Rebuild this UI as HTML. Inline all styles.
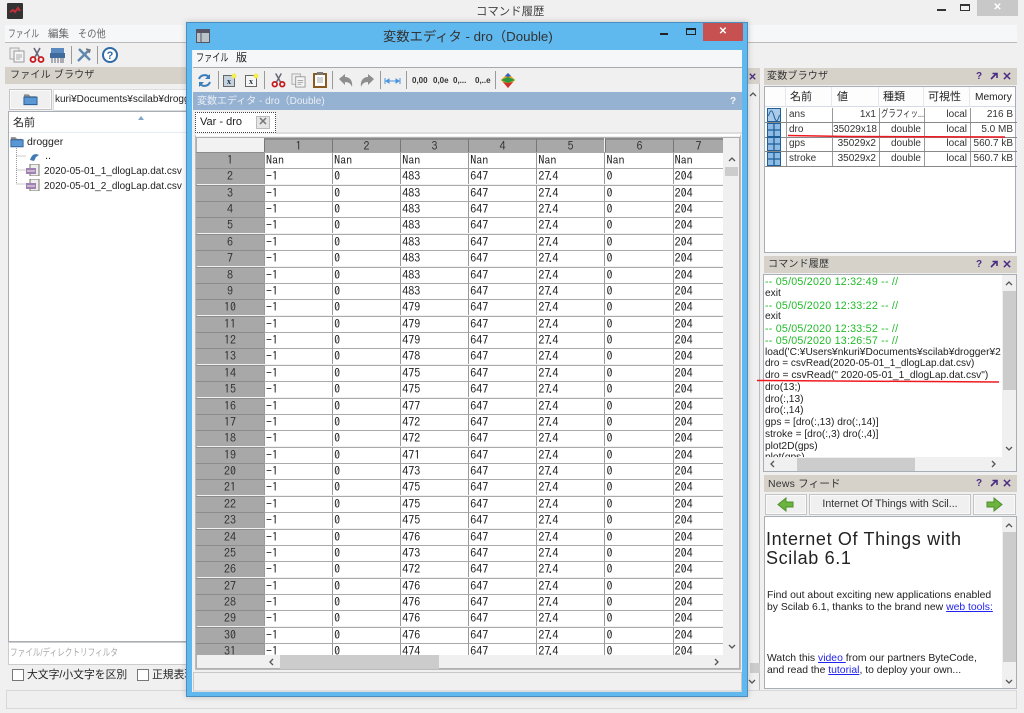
<!DOCTYPE html>
<html lang="ja"><head><meta charset="utf-8"><title>コマンド履歴</title>
<style>
*{box-sizing:border-box}
html,body{margin:0;padding:0;background:#f0f0f0}
#root{position:relative;width:1024px;height:713px;overflow:hidden;background:#f0f0f0;font-family:"Liberation Sans","Noto Sans CJK JP",sans-serif;font-size:11px;color:#222;filter:blur(.3px)}
.a{position:absolute;white-space:nowrap}
.k{display:inline-block;transform-origin:0 50%;white-space:nowrap}
.ph{position:absolute;background:#d6d2ca;height:17px;font-size:10px;line-height:18px;padding-left:3px;color:#333;letter-spacing:.2px}
.q{position:absolute;color:#4b2c83;font-weight:bold;font-size:10px;line-height:12px}
.box{position:absolute;background:#fff;border:1px solid #a9aeb6}
.btn{position:absolute;background:#f0f0f0;border:1px solid #c4c4c4;box-shadow:inset 0 0 0 1px #fafafa}
.sb{position:absolute;background:#f0f0f0}
.th{position:absolute;background:#ccc}
.m{font-family:"IPAGothic","Liberation Mono",monospace;font-size:12px;color:#222}
.m u{text-decoration:none;margin:0 -2px}
.r{position:absolute;left:0;height:17px;display:flex;line-height:15px}
.r b{display:block;width:68px;height:16px;background:#a8a8a8;border-top:1px solid #8c8c8c;font-weight:normal;text-align:center;color:#333}
.r i{display:block;width:68.1px;height:16px;background:#fff;font-style:normal;padding-left:1px;border-left:1px solid #999;border-top:1px solid #aaa}
.r i:last-child{width:50px}
.ch{position:absolute;top:0;height:14px;background:#a8a8a8;border-top:2px solid #8a8a8a;border-left:1px solid #777;text-align:center;line-height:12px;color:#333}
.vr{position:absolute;left:0;width:252px;height:15px;border-bottom:1px solid #888;font-size:10px;line-height:14px;color:#333}
.vr span{position:absolute;top:0;height:14px;border-left:1px solid #999;padding:0 3px 0 2px}
.vr .t{text-align:right}
.cl{position:absolute;left:1px;font-size:10.2px;line-height:12px;color:#222;white-space:nowrap}
.g{color:#22bb2a;font-size:10.7px;letter-spacing:.22px}
.n{position:absolute;left:2px;font-size:10.4px;line-height:12px;white-space:nowrap;color:#222}
.n a{color:#2222ee;text-decoration:underline}
svg{position:absolute;overflow:visible}
.sep{position:absolute;width:1px;background:#9a9a9a}
.tt{position:absolute;font-size:8px;font-weight:bold;color:#333;top:76px}
</style></head><body><div id="root">

<svg width="0" height="0" style="position:absolute"><defs>
<symbol id="sc" viewBox="0 0 16 16"><path d="M5 1l5 9M11 1L6 10" stroke="#667" stroke-width="1.6" fill="none"/><circle cx="4" cy="12.5" r="2.5" fill="none" stroke="#c8161b" stroke-width="1.8"/><circle cx="12" cy="12.5" r="2.5" fill="none" stroke="#c8161b" stroke-width="1.8"/></symbol>
<symbol id="cp" viewBox="0 0 16 16"><rect x="1" y="1" width="9" height="11" fill="#eee" stroke="#aaa"/><rect x="5" y="4" width="10" height="11" fill="#f5f5f5" stroke="#999"/><path d="M7 8h6M7 10h6M7 12h4" stroke="#aaa"/></symbol>
<symbol id="gr" viewBox="0 0 14 14"><rect x=".5" y=".5" width="13" height="13" fill="#8dbbe3" stroke="#1f5f99"/><path d="M7 1v12M1 7h12" stroke="#1f5f99" stroke-width="1.3"/></symbol>
<symbol id="fo" viewBox="0 0 16 14"><path d="M1 12V2h5l2 2h6v3z" fill="#8a8a8a"/><path d="M1 5h14v8H1z" fill="#5b97d5" stroke="#2a5c94"/></symbol>
<symbol id="cs" viewBox="0 0 14 12"><rect x="4" y="0" width="9" height="12" fill="#eee" stroke="#776"/><rect x="0" y="4" width="10" height="6" fill="#a080b0"/><path d="M1 7h8" stroke="#eee"/></symbol>
<symbol id="pa" viewBox="0 0 8 8"><path d="M1 7l5-5M2.5 1.5h4.500v4.500" stroke="#4b2c83" stroke-width="1.6" fill="none"/></symbol>
<symbol id="px" viewBox="0 0 9 9"><path d="M1 1l7 7M8 1l-7 7" stroke="#4b2c83" stroke-width="1.7" fill="none"/></symbol>
</defs></svg>

<!-- main window chrome -->
<svg style="left:7px;top:3px" width="16" height="16"><rect width="16" height="16" fill="#333" rx="1"/><path d="M3 9l3-2 2 2 3-4 2 3" stroke="#c0303a" stroke-width="2" fill="none"/></svg>
<div class="a" style="left:476px;top:3px;font-size:11.4px;line-height:18px;color:#444">コマンド履歴</div>
<div class="a" style="left:937px;top:9px;width:9px;height:2px;background:#333"></div>
<div class="a" style="left:960px;top:4px;width:10px;height:7px;border:1px solid #333;border-top:2px solid #333"></div>
<div class="a" style="left:977px;top:0;width:41px;height:16px;background:#c8c8c8;color:#fff;text-align:center;font-size:10px;font-weight:bold;line-height:15px">✕</div>
<div class="a" style="left:5px;top:25px;width:1012px;height:18px;background:#f6f7f8;border-bottom:1px solid #bbb"></div>
<div class="a" style="left:8px;top:26px;font-size:10.5px;line-height:16px;color:#666"><span class="k" style="transform:scaleX(.74)">ファイル</span></div>
<div class="a" style="left:48px;top:26px;font-size:10.5px;line-height:16px;color:#666">編集</div>
<div class="a" style="left:78px;top:26px;font-size:10.5px;line-height:16px;color:#666"><span class="k" style="transform:scaleX(.88)">その他</span></div>

<svg style="left:9px;top:47px" width="16" height="16"><use href="#cp"/></svg>
<svg style="left:29px;top:47px" width="16" height="16"><use href="#sc"/></svg>
<svg style="left:50px;top:48px" width="16" height="15"><rect x="1" y="0" width="13" height="6" fill="#5b8ac0"/><rect x="0" y="5" width="15" height="5" fill="#3e6a9c"/><path d="M2 10v5M5 10v5M8 10v5M11 10v5M13 10v5" stroke="#667" /></svg>
<div class="sep" style="left:71px;top:46px;height:18px"></div>
<svg style="left:76px;top:47px" width="16" height="16"><path d="M2 14L13 3M3 2l11 11" stroke="#5f87ad" stroke-width="2.4"/><path d="M10 2l4 1-1 3" stroke="#777" fill="none" stroke-width="1.5"/></svg>
<div class="sep" style="left:97px;top:46px;height:18px"></div>
<svg style="left:102px;top:47px" width="16" height="16"><circle cx="8" cy="8" r="7" fill="#fff" stroke="#2f6aa8" stroke-width="2"/><text x="8" y="12" font-size="11" font-weight="bold" text-anchor="middle" fill="#2f6aa8" font-family="Liberation Sans">?</text></svg>

<!-- left panel -->
<div class="ph" style="left:5px;top:67px;width:182px;padding-left:5px">ファイル ブラウザ</div>
<div class="btn" style="left:9px;top:89px;width:43px;height:21px"></div>
<svg style="left:23px;top:92px" width="15" height="14"><use href="#fo"/></svg>
<div class="a box" style="left:53px;top:89px;width:135px;height:22px;border-color:#ddd;line-height:20px;padding-left:1px;font-size:10px;overflow:hidden">kuri¥Documents¥scilab¥drogger¥</div>
<div class="box" style="left:8px;top:111px;width:180px;height:531px"></div>
<div class="a" style="left:13px;top:116px;font-size:11px;line-height:14px">名前</div>
<div class="a" style="left:9px;top:132px;width:178px;height:1px;background:#e6ecf3"></div>
<div class="a" style="left:138px;top:113px;width:0;height:0;border:3px solid transparent;border-bottom:4px solid #7ea6cc"></div>
<svg style="left:10px;top:135px" width="14" height="13"><use href="#fo"/></svg>
<div class="a" style="left:27px;top:136px;line-height:13px;font-size:10.5px">drogger</div>
<svg style="left:16px;top:148px" width="30" height="40"><path d="M.5 0V36M.5 8h10M.5 22h10M.5 36h10" stroke="#999" stroke-dasharray="1 1" fill="none"/></svg>
<svg style="left:29px;top:151px" width="11" height="11"><path d="M1 9C3 3 6 2 10 4L7 6 5 10z" fill="#3f7ab5"/></svg>
<div class="a" style="left:45px;top:150px;line-height:12px">..</div>
<svg style="left:26px;top:164px" width="14" height="12"><use href="#cs"/></svg>
<svg style="left:26px;top:179px" width="14" height="12"><use href="#cs"/></svg>
<div class="a" style="left:44px;top:165px;line-height:14px;font-size:10px">2020-05-01_1_dlogLap.dat.csv</div>
<div class="a" style="left:44px;top:180px;line-height:14px;font-size:10px">2020-05-01_2_dlogLap.dat.csv</div>
<div class="box" style="left:8px;top:642px;width:180px;height:23px;border-color:#ccc;color:#aaa;font-size:10px;line-height:21px;padding-left:1px;white-space:nowrap;overflow:hidden"><span class="k" style="transform:scaleX(.76)">ファイル/ディレクトリフィルタ</span></div>
<div class="a" style="left:12px;top:669px;width:12px;height:12px;background:#fff;border:1px solid #777"></div>
<div class="a" style="left:27px;top:668px;font-size:10.8px;line-height:14px">大文字/小文字を区別</div>
<div class="a" style="left:137px;top:669px;width:12px;height:12px;background:#fff;border:1px solid #777"></div>
<div class="a" style="left:152px;top:668px;font-size:10.8px;line-height:14px">正規表現</div>
<div class="a" style="left:6px;top:690px;width:1011px;height:19px;border:1px solid #d8d8d8;background:#efefef"></div>

<!-- middle sliver -->
<div class="a" style="left:748px;top:68px;width:12px;height:16px;background:#d6d2ca"></div>
<svg style="left:749px;top:73px" width="7" height="7"><use href="#px"/></svg>
<div class="a" style="left:749px;top:84px;width:11px;height:606px;background:#f0f0f0;border-right:1px solid #bbb"></div>
<div class="a" style="left:750px;top:663px;width:10px;height:10px;background:#ccc"></div>
<svg style="left:749px;top:92px" width="8" height="5"><path d="M1 4l3-3 3 3" stroke="#555" stroke-width="1.3" fill="none"/></svg>
<svg style="left:748px;top:679px" width="8" height="5"><path d="M1 1l3 3 3-3" stroke="#555" stroke-width="1.3" fill="none"/></svg>

<!-- variable browser -->
<div class="ph" style="left:764px;top:68px;width:253px">変数ブラウザ</div>
<div class="q" style="left:976px;top:71px">?</div><svg style="left:990px;top:72px" width="8" height="8"><use href="#pa"/></svg><svg style="left:1003px;top:72px" width="8" height="8"><use href="#px"/></svg>
<div class="box" style="left:764px;top:86px;width:252px;height:167px;border-color:#a9aeb6"></div>
<div class="a" style="left:765px;top:87px;width:250px;height:20px;background:#fdfdfd;border-bottom:1px solid #d5dce5"></div>
<div class="a" style="left:790px;top:90px;font-size:11px;line-height:15px">名前</div>
<div class="a" style="left:837px;top:90px;font-size:11px;line-height:15px">値</div>
<div class="a" style="left:883px;top:90px;font-size:11px;line-height:15px">種類</div>
<div class="a" style="left:928px;top:90px;font-size:11px;line-height:15px">可視性</div>
<div class="a" style="left:975px;top:90px;font-size:10.2px;line-height:15px">Memory</div>
<div class="a" style="left:785px;top:87px;width:1px;height:20px;background:#e4e8ee"></div>
<div class="a" style="left:831px;top:87px;width:1px;height:20px;background:#e4e8ee"></div>
<div class="a" style="left:878px;top:87px;width:1px;height:20px;background:#e4e8ee"></div>
<div class="a" style="left:923px;top:87px;width:1px;height:20px;background:#e4e8ee"></div>
<div class="a" style="left:969px;top:87px;width:1px;height:20px;background:#e4e8ee"></div>
<div class="a" style="left:765px;top:108px;width:250px;height:58px">
 <div class="vr" style="top:0"><span style="left:21px;width:46px">ans</span><span class="t" style="left:67px;width:47px">1x1</span><span style="left:114px;width:45px;overflow:hidden;padding:0 0 0 1px;white-space:nowrap"><span class="k" style="position:static;border:0;padding:0;transform:scaleX(.74)">グラフィッ...</span></span><span class="t" style="left:159px;width:46px">local</span><span class="t" style="left:205px;width:46px">216 B</span></div>
 <div class="vr" style="top:14.6px"><span style="left:21px;width:46px">dro</span><span class="t" style="left:67px;width:47px;padding:0 2px 0 0">35029x18</span><span class="t" style="left:114px;width:45px">double</span><span class="t" style="left:159px;width:46px">local</span><span class="t" style="left:205px;width:46px">5.0 MB</span></div>
 <div class="vr" style="top:29.2px"><span style="left:21px;width:46px">gps</span><span class="t" style="left:67px;width:47px">35029x2</span><span class="t" style="left:114px;width:45px">double</span><span class="t" style="left:159px;width:46px">local</span><span class="t" style="left:205px;width:46px">560.7 kB</span></div>
 <div class="vr" style="top:43.8px"><span style="left:21px;width:46px">stroke</span><span class="t" style="left:67px;width:47px">35029x2</span><span class="t" style="left:114px;width:45px">double</span><span class="t" style="left:159px;width:46px">local</span><span class="t" style="left:205px;width:46px">560.7 kB</span></div>
</div>
<svg style="left:767px;top:108px" width="14" height="14"><rect x=".5" y=".5" width="13" height="13" fill="#a9cbe9" stroke="#1f5f99"/><path d="M1.500 8c2-7 3.500-7 5.500 0s3.500 6 5.500-1" stroke="#1f5f99" fill="none"/></svg>
<svg style="left:767px;top:123px" width="14" height="14"><use href="#gr"/></svg>
<svg style="left:767px;top:137px" width="14" height="14"><use href="#gr"/></svg>
<svg style="left:767px;top:152px" width="14" height="14"><use href="#gr"/></svg>
<svg style="left:788px;top:134px" width="220" height="5"><path d="M0 1.5L60 2.5 217 3" stroke="#f01820" stroke-width="1.5" fill="none"/></svg>

<!-- command history -->
<div class="ph" style="left:764px;top:256px;width:253px;padding-left:4px">コマンド履歴</div>
<div class="q" style="left:976px;top:259px">?</div><svg style="left:990px;top:260px" width="8" height="8"><use href="#pa"/></svg><svg style="left:1003px;top:260px" width="8" height="8"><use href="#px"/></svg>
<div class="box" style="left:763px;top:274px;width:254px;height:198px;overflow:hidden;border-color:#a9aeb6">
 <div class="cl g" style="top:1px">-- 05/05/2020 12:32:49 -- //</div>
 <div class="cl" style="top:13px">exit</div>
 <div class="cl g" style="top:25px">-- 05/05/2020 12:33:22 -- //</div>
 <div class="cl" style="top:36px">exit</div>
 <div class="cl g" style="top:48px">-- 05/05/2020 12:33:52 -- //</div>
 <div class="cl g" style="top:60px">-- 05/05/2020 13:26:57 -- //</div>
 <div class="cl" style="top:72px">load('C:¥Users¥nkuri¥Documents¥scilab¥drogger¥2</div>
 <div class="cl" style="top:83px;font-size:10px">dro = csvRead(2020-05-01_1_dlogLap.dat.csv)</div>
 <div class="cl" style="top:95px">dro = csvRead(" 2020-05-01_1_dlogLap.dat.csv")</div>
 <div class="cl" style="top:107px">dro(13;)</div>
 <div class="cl" style="top:119px">dro(:,13)</div>
 <div class="cl" style="top:130px">dro(:,14)</div>
 <div class="cl" style="top:142px">gps = [dro(:,13) dro(:,14)]</div>
 <div class="cl" style="top:154px">stroke = [dro(:,3) dro(:,4)]</div>
 <div class="cl" style="top:166px">plot2D(gps)</div>
 <div class="cl" style="top:177px">plot(gps)</div>
 <div class="sb" style="left:0;top:182px;width:252px;height:14px"></div>
 <div class="sb" style="left:238px;top:0;width:14px;height:196px"></div>
 <div class="th" style="left:239px;top:16px;width:13px;height:99px"></div>
 <div class="th" style="left:33px;top:183px;width:118px;height:13px"></div>
</div>
<svg style="left:1005px;top:281px" width="8" height="5"><path d="M1 4l3-3 3 3" stroke="#555" stroke-width="1.3" fill="none"/></svg>
<svg style="left:1005px;top:446px" width="8" height="5"><path d="M1 1l3 3 3-3" stroke="#555" stroke-width="1.3" fill="none"/></svg>
<svg style="left:770px;top:460px" width="5" height="8"><path d="M4 1L1 4l3 3" stroke="#555" stroke-width="1.3" fill="none"/></svg>
<svg style="left:991px;top:460px" width="5" height="8"><path d="M1 1l3 3-3 3" stroke="#555" stroke-width="1.3" fill="none"/></svg>
<svg style="left:757px;top:379px" width="243" height="5"><path d="M0 1.5L242 3" stroke="#f01820" stroke-width="1.5" fill="none"/></svg>

<!-- news -->
<div class="ph" style="left:764px;top:475px;width:253px;font-size:10.5px;padding-left:4px">News フィード</div>
<div class="q" style="left:976px;top:478px">?</div><svg style="left:990px;top:479px" width="8" height="8"><use href="#pa"/></svg><svg style="left:1003px;top:479px" width="8" height="8"><use href="#px"/></svg>
<div class="btn" style="left:765px;top:494px;width:42px;height:21px"></div>
<svg style="left:777px;top:497px" width="17" height="15"><path d="M1 7.5L9 1v4h7v5H9v4z" fill="#6cb33f" stroke="#4b8f28"/></svg>
<div class="btn" style="left:809px;top:494px;width:162px;height:21px;text-align:center;line-height:19px;font-size:10.6px;color:#333">Internet Of Things with Scil...</div>
<div class="btn" style="left:973px;top:494px;width:43px;height:21px"></div>
<svg style="left:986px;top:497px" width="17" height="15"><path d="M16 7.5L8 1v4H1v5h7v4z" fill="#6cb33f" stroke="#4b8f28"/></svg>
<div class="box" style="left:764px;top:516px;width:253px;height:173px;overflow:hidden">
 <div class="a" style="left:1px;top:13px;font-size:18px;line-height:19px;letter-spacing:.65px;color:#222">Internet Of Things with<br>Scilab 6.1</div>
 <div class="n" style="top:73px">Find out about exciting new applications enabled</div>
 <div class="n" style="top:85px">by Scilab 6.1, thanks to the brand new <a>web tools:</a></div>
 <div class="n" style="top:136px">Watch this <a>video </a>from our partners ByteCode,</div>
 <div class="n" style="top:148px">and read the <a>tutorial</a>, to deploy your own...</div>
 <div class="sb" style="left:237px;top:0;width:14px;height:171px"></div>
 <div class="th" style="left:238px;top:15px;width:13px;height:130px"></div>
</div>
<svg style="left:1005px;top:523px" width="8" height="5"><path d="M1 4l3-3 3 3" stroke="#555" stroke-width="1.3" fill="none"/></svg>
<svg style="left:1005px;top:679px" width="8" height="5"><path d="M1 1l3 3 3-3" stroke="#555" stroke-width="1.3" fill="none"/></svg>

<!-- floating editor window -->
<div class="a" style="left:186px;top:22px;width:562px;height:675px;background:#5fb8ee;border:1px solid #4a8fc0;box-shadow:0 0 6px rgba(0,0,0,.2)"></div>
<svg style="left:196px;top:29px" width="14" height="14"><rect x=".5" y=".5" width="13" height="13" fill="#b8c4c8" stroke="#556"/><rect x="1" y="1" width="12" height="3" fill="#556"/><path d="M5 4v9" stroke="#556"/></svg>
<div class="a" style="left:383px;top:27px;font-size:13.3px;line-height:20px;color:#333">変数エディタ - dro（Double)</div>
<div class="a" style="left:660px;top:33px;width:8px;height:2px;background:#222"></div>
<div class="a" style="left:686px;top:28px;width:10px;height:7px;border:1px solid #222;border-top:2px solid #222"></div>
<div class="a" style="left:703px;top:23px;width:40px;height:18px;background:#c75050;color:#fff;text-align:center;font-weight:bold;font-size:10px;line-height:17px">✕</div>
<div class="a" style="left:192px;top:50px;width:550px;height:642px;background:#f0f0f0"></div>
<div class="a" style="left:193px;top:50px;width:549px;height:18px;background:#f6f7f8;border-bottom:1px solid #aaa"></div>
<div class="a" style="left:196px;top:50px;font-size:11px;line-height:16px"><span class="k" style="transform:scaleX(.74)">ファイル</span></div>
<div class="a" style="left:236px;top:50px;font-size:11px;line-height:16px">版</div>

<svg style="left:197px;top:73px" width="15" height="15"><path d="M2 6a6 6 0 0 1 10-2M13 9a6 6 0 0 1-10 2" stroke="#3c7dbb" stroke-width="2" fill="none"/><path d="M13 1v5H8zM2 14V9h5z" fill="#3c7dbb"/></svg>
<div class="sep" style="left:218px;top:71px;height:18px"></div>
<svg style="left:223px;top:73px" width="14" height="15"><rect x=".5" y="2.5" width="11" height="11" fill="#c5d3e0" stroke="#666"/><text x="6" y="11" font-size="8" font-weight="bold" text-anchor="middle" fill="#234" font-family="Liberation Serif">x</text><circle cx="11" cy="3" r="2.5" fill="#f3ee50"/></svg>
<svg style="left:245px;top:73px" width="14" height="15"><rect x=".5" y="2.5" width="11" height="11" fill="#f5f5f5" stroke="#666"/><text x="6" y="11" font-size="8" font-weight="bold" text-anchor="middle" fill="#234" font-family="Liberation Serif">x</text><circle cx="11" cy="3" r="2.5" fill="#f3ee50"/></svg>
<div class="sep" style="left:264px;top:71px;height:18px"></div>
<svg style="left:271px;top:72px" width="15" height="16"><use href="#sc"/></svg>
<svg style="left:291px;top:73px" width="15" height="15"><use href="#cp"/></svg>
<svg style="left:313px;top:72px" width="14" height="16"><rect x="1" y="2" width="12" height="13" fill="#fff" stroke="#8a5a20" stroke-width="2"/><rect x="4" y="0" width="6" height="3" fill="#777"/><path d="M4 6h6M4 8h6M4 10h6" stroke="#aaa"/></svg>
<div class="sep" style="left:332px;top:71px;height:18px"></div>
<svg style="left:339px;top:74px" width="14" height="13"><path d="M0 5l6-5v3c5 0 8 4 7 10-1-3-3-5-7-5v3z" fill="#8e8e8e"/></svg>
<svg style="left:360px;top:74px" width="14" height="13"><path d="M14 5L8 0v3C3 3 0 7 1 13c1-3 3-5 7-5v3z" fill="#8e8e8e"/></svg>
<div class="sep" style="left:380px;top:71px;height:18px"></div>
<svg style="left:385px;top:78px" width="15" height="6"><path d="M0 3h15" stroke="#4a94dd"/><path d="M0 0v6M15 0v6M1 3l3-2v4zM14 3l-3-2v4z" stroke="#4a94dd" fill="#4a94dd"/></svg>
<div class="sep" style="left:406px;top:71px;height:18px"></div>
<div class="tt" style="left:412px">0,00</div><div class="tt" style="left:433px">0,0e</div><div class="tt" style="left:453px">0,...</div><div class="tt" style="left:475px">0,..e</div>
<div class="sep" style="left:495px;top:71px;height:18px"></div>
<svg style="left:501px;top:73px" width="14" height="15"><path d="M7 0l7 7-7 8-7-8z" fill="#e8a020"/><path d="M0 7l7-3 7 3-7 3z" fill="#2a9a40"/><path d="M2 9l5 1 5-1-5 6z" fill="#d03030"/><path d="M4 3l3-3 3 3-3 1z" fill="#3060c0"/></svg>

<div class="a" style="left:193px;top:92px;width:549px;height:18px;background:#96b2d2;color:#e8eef5;font-size:10px;line-height:19px;padding-left:4px">変数エディタ - dro（Double)</div>
<div class="a" style="left:730px;top:96px;color:#f4f6f8;font-weight:bold;font-size:10px;line-height:11px">?</div>
<div class="a" style="left:195px;top:112px;width:81px;height:21px;background:#fff;border:1px dotted #444;font-size:11px;line-height:19px;padding-left:4px">Var - dro</div>
<div class="a" style="left:256px;top:116px;width:14px;height:13px;background:#e6e6e6;border:1px solid #bbb;color:#777;font-size:11px;font-weight:bold;line-height:11px;text-align:center">✕</div>
<div class="a" style="left:276px;top:132px;width:466px;height:2px;background:#ddd"></div>

<!-- table -->
<div class="a" style="left:195px;top:134px;width:546px;height:536px;background:#f0f0f0;border:1px solid #bbb;border-top:2px solid #fff"></div>
<div class="a" style="left:196px;top:137px;width:544px;height:532px;border:1px solid #b0b0b0"></div>
<div class="a" style="left:197px;top:138px;width:67px;height:14px;background:#f2f2f2"></div>
<div class="a m" style="left:264px;top:138px;width:459px;height:14px;overflow:hidden">
 <div class="ch" style="left:0;width:68px">1</div><div class="ch" style="left:68px;width:68px">2</div><div class="ch" style="left:136px;width:68px">3</div><div class="ch" style="left:204px;width:68px">4</div><div class="ch" style="left:272px;width:68px">5</div><div class="ch" style="left:341px;width:68px">6</div><div class="ch" style="left:409px;width:50px">7</div>
</div>
<div class="a m" style="left:196px;top:152px;width:527px;height:503px;overflow:hidden">
<div class="r" style="top:0"><b>1</b><i>Nan</i><i>Nan</i><i>Nan</i><i>Nan</i><i>Nan</i><i>Nan</i><i>Nan</i></div>
<div class="r" style="top:16.37px"><b>2</b><i>-1</i><i>0</i><i>483</i><i>647</i><i>27<u>.</u>4</i><i>0</i><i>204</i></div>
<div class="r" style="top:32.74px"><b>3</b><i>-1</i><i>0</i><i>483</i><i>647</i><i>27<u>.</u>4</i><i>0</i><i>204</i></div>
<div class="r" style="top:49.11px"><b>4</b><i>-1</i><i>0</i><i>483</i><i>647</i><i>27<u>.</u>4</i><i>0</i><i>204</i></div>
<div class="r" style="top:65.48px"><b>5</b><i>-1</i><i>0</i><i>483</i><i>647</i><i>27<u>.</u>4</i><i>0</i><i>204</i></div>
<div class="r" style="top:81.85px"><b>6</b><i>-1</i><i>0</i><i>483</i><i>647</i><i>27<u>.</u>4</i><i>0</i><i>204</i></div>
<div class="r" style="top:98.22px"><b>7</b><i>-1</i><i>0</i><i>483</i><i>647</i><i>27<u>.</u>4</i><i>0</i><i>204</i></div>
<div class="r" style="top:114.59px"><b>8</b><i>-1</i><i>0</i><i>483</i><i>647</i><i>27<u>.</u>4</i><i>0</i><i>204</i></div>
<div class="r" style="top:130.96px"><b>9</b><i>-1</i><i>0</i><i>483</i><i>647</i><i>27<u>.</u>4</i><i>0</i><i>204</i></div>
<div class="r" style="top:147.33px"><b>10</b><i>-1</i><i>0</i><i>479</i><i>647</i><i>27<u>.</u>4</i><i>0</i><i>204</i></div>
<div class="r" style="top:163.7px"><b>11</b><i>-1</i><i>0</i><i>479</i><i>647</i><i>27<u>.</u>4</i><i>0</i><i>204</i></div>
<div class="r" style="top:180.07px"><b>12</b><i>-1</i><i>0</i><i>479</i><i>647</i><i>27<u>.</u>4</i><i>0</i><i>204</i></div>
<div class="r" style="top:196.44px"><b>13</b><i>-1</i><i>0</i><i>478</i><i>647</i><i>27<u>.</u>4</i><i>0</i><i>204</i></div>
<div class="r" style="top:212.81px"><b>14</b><i>-1</i><i>0</i><i>475</i><i>647</i><i>27<u>.</u>4</i><i>0</i><i>204</i></div>
<div class="r" style="top:229.18px"><b>15</b><i>-1</i><i>0</i><i>475</i><i>647</i><i>27<u>.</u>4</i><i>0</i><i>204</i></div>
<div class="r" style="top:245.55px"><b>16</b><i>-1</i><i>0</i><i>477</i><i>647</i><i>27<u>.</u>4</i><i>0</i><i>204</i></div>
<div class="r" style="top:261.92px"><b>17</b><i>-1</i><i>0</i><i>472</i><i>647</i><i>27<u>.</u>4</i><i>0</i><i>204</i></div>
<div class="r" style="top:278.29px"><b>18</b><i>-1</i><i>0</i><i>472</i><i>647</i><i>27<u>.</u>4</i><i>0</i><i>204</i></div>
<div class="r" style="top:294.66px"><b>19</b><i>-1</i><i>0</i><i>471</i><i>647</i><i>27<u>.</u>4</i><i>0</i><i>204</i></div>
<div class="r" style="top:311.03px"><b>20</b><i>-1</i><i>0</i><i>473</i><i>647</i><i>27<u>.</u>4</i><i>0</i><i>204</i></div>
<div class="r" style="top:327.4px"><b>21</b><i>-1</i><i>0</i><i>475</i><i>647</i><i>27<u>.</u>4</i><i>0</i><i>204</i></div>
<div class="r" style="top:343.77px"><b>22</b><i>-1</i><i>0</i><i>475</i><i>647</i><i>27<u>.</u>4</i><i>0</i><i>204</i></div>
<div class="r" style="top:360.14px"><b>23</b><i>-1</i><i>0</i><i>475</i><i>647</i><i>27<u>.</u>4</i><i>0</i><i>204</i></div>
<div class="r" style="top:376.51px"><b>24</b><i>-1</i><i>0</i><i>476</i><i>647</i><i>27<u>.</u>4</i><i>0</i><i>204</i></div>
<div class="r" style="top:392.88px"><b>25</b><i>-1</i><i>0</i><i>473</i><i>647</i><i>27<u>.</u>4</i><i>0</i><i>204</i></div>
<div class="r" style="top:409.25px"><b>26</b><i>-1</i><i>0</i><i>472</i><i>647</i><i>27<u>.</u>4</i><i>0</i><i>204</i></div>
<div class="r" style="top:425.62px"><b>27</b><i>-1</i><i>0</i><i>476</i><i>647</i><i>27<u>.</u>4</i><i>0</i><i>204</i></div>
<div class="r" style="top:441.99px"><b>28</b><i>-1</i><i>0</i><i>476</i><i>647</i><i>27<u>.</u>4</i><i>0</i><i>204</i></div>
<div class="r" style="top:458.36px"><b>29</b><i>-1</i><i>0</i><i>476</i><i>647</i><i>27<u>.</u>4</i><i>0</i><i>204</i></div>
<div class="r" style="top:474.73px"><b>30</b><i>-1</i><i>0</i><i>476</i><i>647</i><i>27<u>.</u>4</i><i>0</i><i>204</i></div>
<div class="r" style="top:491.1px"><b>31</b><i>-1</i><i>0</i><i>474</i><i>647</i><i>27<u>.</u>4</i><i>0</i><i>204</i></div>
</div>
<div class="th" style="left:725px;top:167px;width:13px;height:9px"></div>
<div class="th" style="left:280px;top:655px;width:159px;height:14px"></div>
<svg style="left:728px;top:157px" width="8" height="5"><path d="M1 4l3-3 3 3" stroke="#555" stroke-width="1.3" fill="none"/></svg>
<svg style="left:728px;top:644px" width="8" height="5"><path d="M1 1l3 3 3-3" stroke="#555" stroke-width="1.3" fill="none"/></svg>
<svg style="left:269px;top:658px" width="5" height="8"><path d="M4 1L1 4l3 3" stroke="#555" stroke-width="1.3" fill="none"/></svg>
<svg style="left:714px;top:658px" width="5" height="8"><path d="M1 1l3 3-3 3" stroke="#555" stroke-width="1.3" fill="none"/></svg>
<div class="a" style="left:193px;top:672px;width:549px;height:20px;background:#f0f0f0;border:1px solid #c8c8c8;border-bottom:2px solid #ddd"></div>

</div></body></html>
